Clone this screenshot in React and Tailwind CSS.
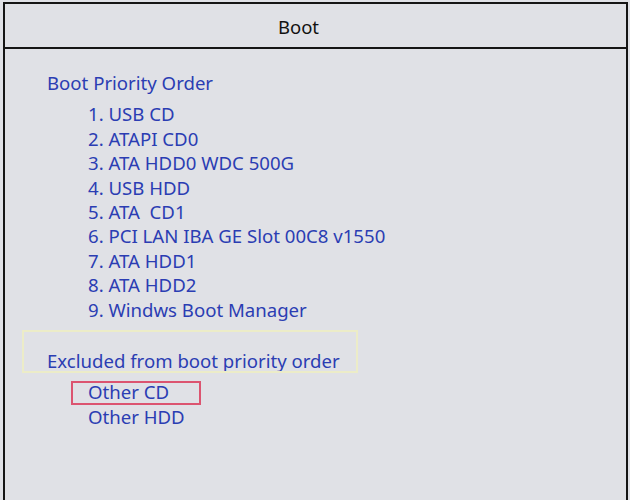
import React from 'react';

const bootOrder = [
  '1. USB CD',
  '2. ATAPI CD0',
  '3. ATA HDD0 WDC 500G',
  '4. USB HDD',
  '5. ATA\u00a0 CD1',
  '6. PCI LAN IBA GE Slot 00C8 v1550',
  '7. ATA HDD1',
  '8. ATA HDD2',
  '9. Windws Boot Manager',
];

const App = () => {
  return (
    <div className="w-[630px] h-[500px] bg-[#e0e1e6] pl-[3px] pt-[2px] overflow-hidden" style={{ fontFamily: '"Noto Sans", "Open Sans", sans-serif' }}>
      <div className="w-[625px] h-[510px] border-2 border-b-0 border-[#151515] flex flex-col">
        {/* header */}
        <div className="h-[45px] flex items-center justify-center border-b-2 border-[#151515] pr-[34px] pt-[2px]">
          <span className="text-[18.5px] text-[#111]">Boot</span>
        </div>

        <div className="relative flex-1 pl-[42px] pt-[22px] text-[#2b3db3] text-[18.6px] leading-[24.4px]">
          <div>Boot Priority Order</div>
          <div className="pl-[41px] pt-[7px]">
            {bootOrder.map((item) => (
              <div key={item}>{item}</div>
            ))}
          </div>

          <div className="pt-[27px]">Excluded from boot priority order</div>
          <div className="pl-[41px] pt-[7px]">
            <div>Other CD</div>
            <div>Other HDD</div>
          </div>

          {/* annotation boxes */}
          <div className="absolute left-[17px] top-[281px] w-[336px] h-[43px] border-2 border-[#ececc8]"></div>
          <div className="absolute left-[66px] top-[332px] w-[130px] h-[24px] border-2 border-[#dc5470]"></div>
        </div>
      </div>
    </div>
  );
};

export default App;
